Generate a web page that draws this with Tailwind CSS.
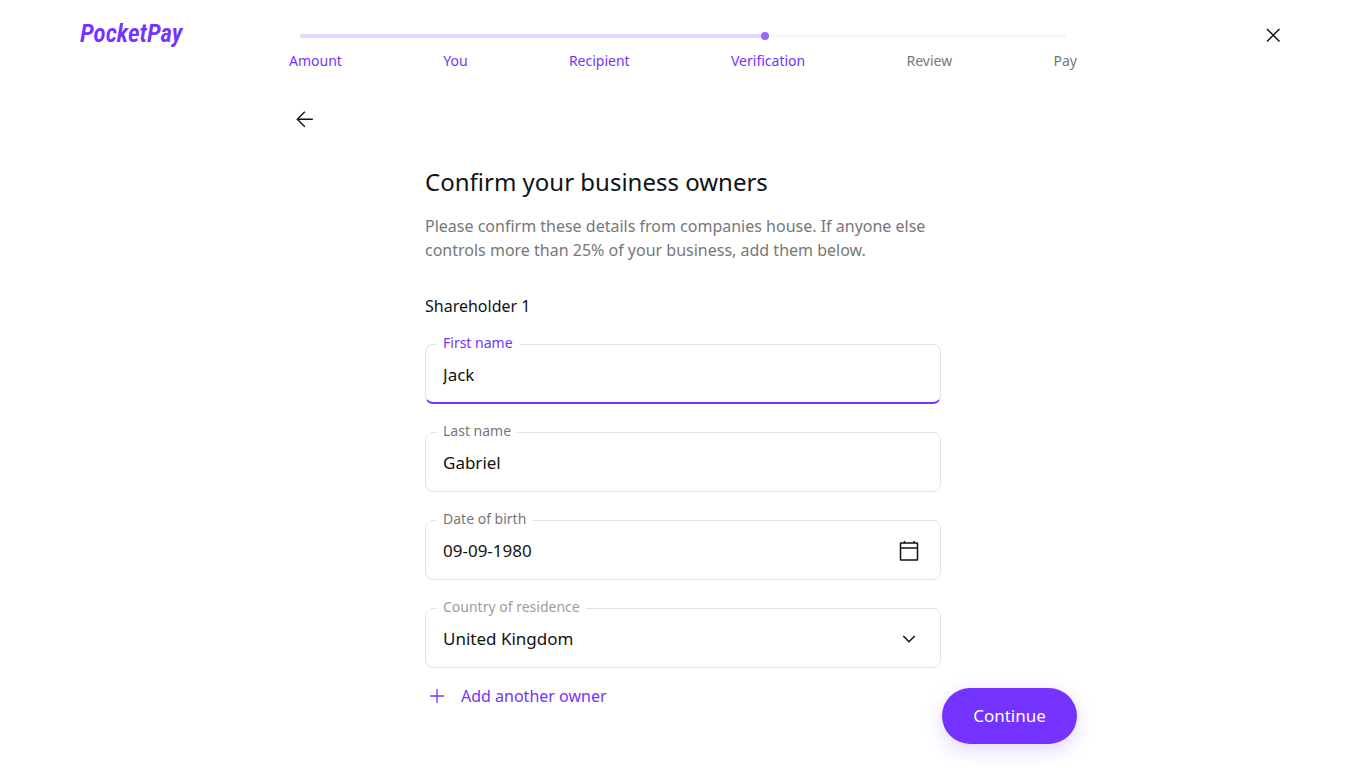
<!DOCTYPE html>
<html lang="en">
<head>
<meta charset="utf-8">
<meta name="viewport" content="width=device-width, initial-scale=1">
<title>PocketPay – Confirm your business owners</title>
<script src="https://cdn.jsdelivr.net/npm/@tailwindcss/browser@4"></script>
</head>
<body class="min-h-screen bg-white font-['Noto_Sans','Open_Sans',sans-serif] text-[#121212]">
<header class="grid grid-cols-[1fr_minmax(0,788px)_1fr] items-start px-20 pt-5">
  <a href="#" class="font-['Liberation_Sans_Narrow','Roboto_Condensed','Liberation_Sans',sans-serif] text-[25px] leading-7 font-semibold text-[#7433ff] italic">PocketPay</a>
  <nav aria-label="Progress" class="pt-3">
    <div class="mx-[11px] flex h-2 items-center">
      <div class="h-1 w-[461px] rounded-l-full bg-[#e3d6ff]"></div>
      <div class="size-2 rounded-full bg-[#9966ff]"></div>
      <div class="h-1 flex-1 bg-[#f8f8f8]"></div>
    </div>
    <ol class="mt-[11px] flex justify-between text-sm leading-5 text-[#7433ff]">
      <li>Amount</li>
      <li>You</li>
      <li>Recipient</li>
      <li aria-current="step">Verification</li>
      <li class="text-[#777779]">Review</li>
      <li class="text-[#777779]">Pay</li>
    </ol>
  </nav>
  <button type="button" aria-label="Close" class="mt-[2px] justify-self-end">
    <svg class="size-[26px]" viewBox="0 0 26 26" fill="none" stroke="currentColor" stroke-width="1.500"><path d="M7 7l12.500 12.500M19.500 7L7 19.500"/></svg>
  </button>
</header>
<main class="mx-auto max-w-[788px]">
  <button type="button" aria-label="Back" class="mt-9 ml-1 block">
    <svg class="size-6" viewBox="0 0 24 24" fill="none" stroke="currentColor" stroke-width="1.400"><path d="M19.800 12.300H4.500M11.800 4.800L4.300 12.300l7.500 7.500"/></svg>
  </button>
  <form class="grid grid-cols-[1fr_minmax(0,516px)_1fr] pt-[35px] pb-8">
    <div class="col-start-2">
      <h1 class="text-2xl leading-8">Confirm your business owners</h1>
      <p class="mt-4 text-base leading-6 text-[#777779]">Please confirm these details from companies house. If anyone else controls more than 25% of your business, add them below.</p>
      <h2 class="mt-8 text-base leading-6">Shareholder 1</h2>
      <div class="mt-4 flex flex-col gap-[18px]">
        <fieldset class="min-w-0 rounded-lg border border-b-2 border-[#e3e3e5] border-b-[#7433ff] px-[11px]">
          <legend class="px-[6px] pb-[2px] text-sm leading-[18px] text-[#7433ff]"><label for="first">First name</label></legend>
          <input id="first" type="text" value="Jack" class="h-12 w-full px-[6px] pb-2 text-[17px] outline-none">
        </fieldset>
        <fieldset class="min-w-0 rounded-lg border border-[#e3e3e5] px-[11px]">
          <legend class="px-[6px] pb-[2px] text-sm leading-[18px] text-[#777779]"><label for="last">Last name</label></legend>
          <input id="last" type="text" value="Gabriel" class="h-[49px] w-full px-[6px] pb-2 text-[17px] outline-none">
        </fieldset>
        <fieldset class="min-w-0 rounded-lg border border-[#e3e3e5] px-[11px]">
          <legend class="px-[6px] pb-[2px] text-sm leading-[18px] text-[#777779]"><label for="dob">Date of birth</label></legend>
          <div class="flex h-[49px] items-center pb-2">
            <input id="dob" type="text" value="09-09-1980" class="min-w-0 flex-1 px-[6px] text-[17px] outline-none">
            <button type="button" aria-label="Open calendar" class="mr-2">
              <svg class="size-6" viewBox="0 0 24 24" fill="none" stroke="currentColor" stroke-width="1.500"><rect x="3.500" y="4" width="17" height="17" rx=".5"/><path d="M3.500 9h17M7.500 4V2M17 4V2"/></svg>
            </button>
          </div>
        </fieldset>
        <fieldset class="min-w-0 rounded-lg border border-[#e3e3e5] px-[11px]">
          <legend class="px-[6px] pb-[2px] text-sm leading-[18px] text-[#9c9ca0]"><label for="country">Country of residence</label></legend>
          <div class="grid h-[49px] items-center pb-2">
            <select id="country" class="col-start-1 row-start-1 w-full appearance-none px-[6px] text-[17px] outline-none"><option>United Kingdom</option></select>
            <svg class="pointer-events-none col-start-1 row-start-1 mr-2 size-6 justify-self-end" viewBox="0 0 24 24" fill="none" stroke="currentColor" stroke-width="1.600"><path d="M6.300 9l5.700 5.700L17.700 9"/></svg>
          </div>
        </fieldset>
      </div>
      <button type="button" class="mt-4 mb-9 flex items-center gap-3 text-base leading-6 text-[#7433ff]">
        <svg class="size-6" viewBox="0 0 24 24" fill="none" stroke="currentColor" stroke-width="1.300"><path d="M12 5v14M5 12h14"/></svg>
        Add another owner
      </button>
    </div>
    <button type="submit" class="h-14 w-[135px] self-end justify-self-end rounded-full bg-[#7433ff] text-[17px] text-white shadow-[0_6px_20px_rgba(116,51,255,0.2)]">Continue</button>
  </form>
</main>
</body>
</html>
